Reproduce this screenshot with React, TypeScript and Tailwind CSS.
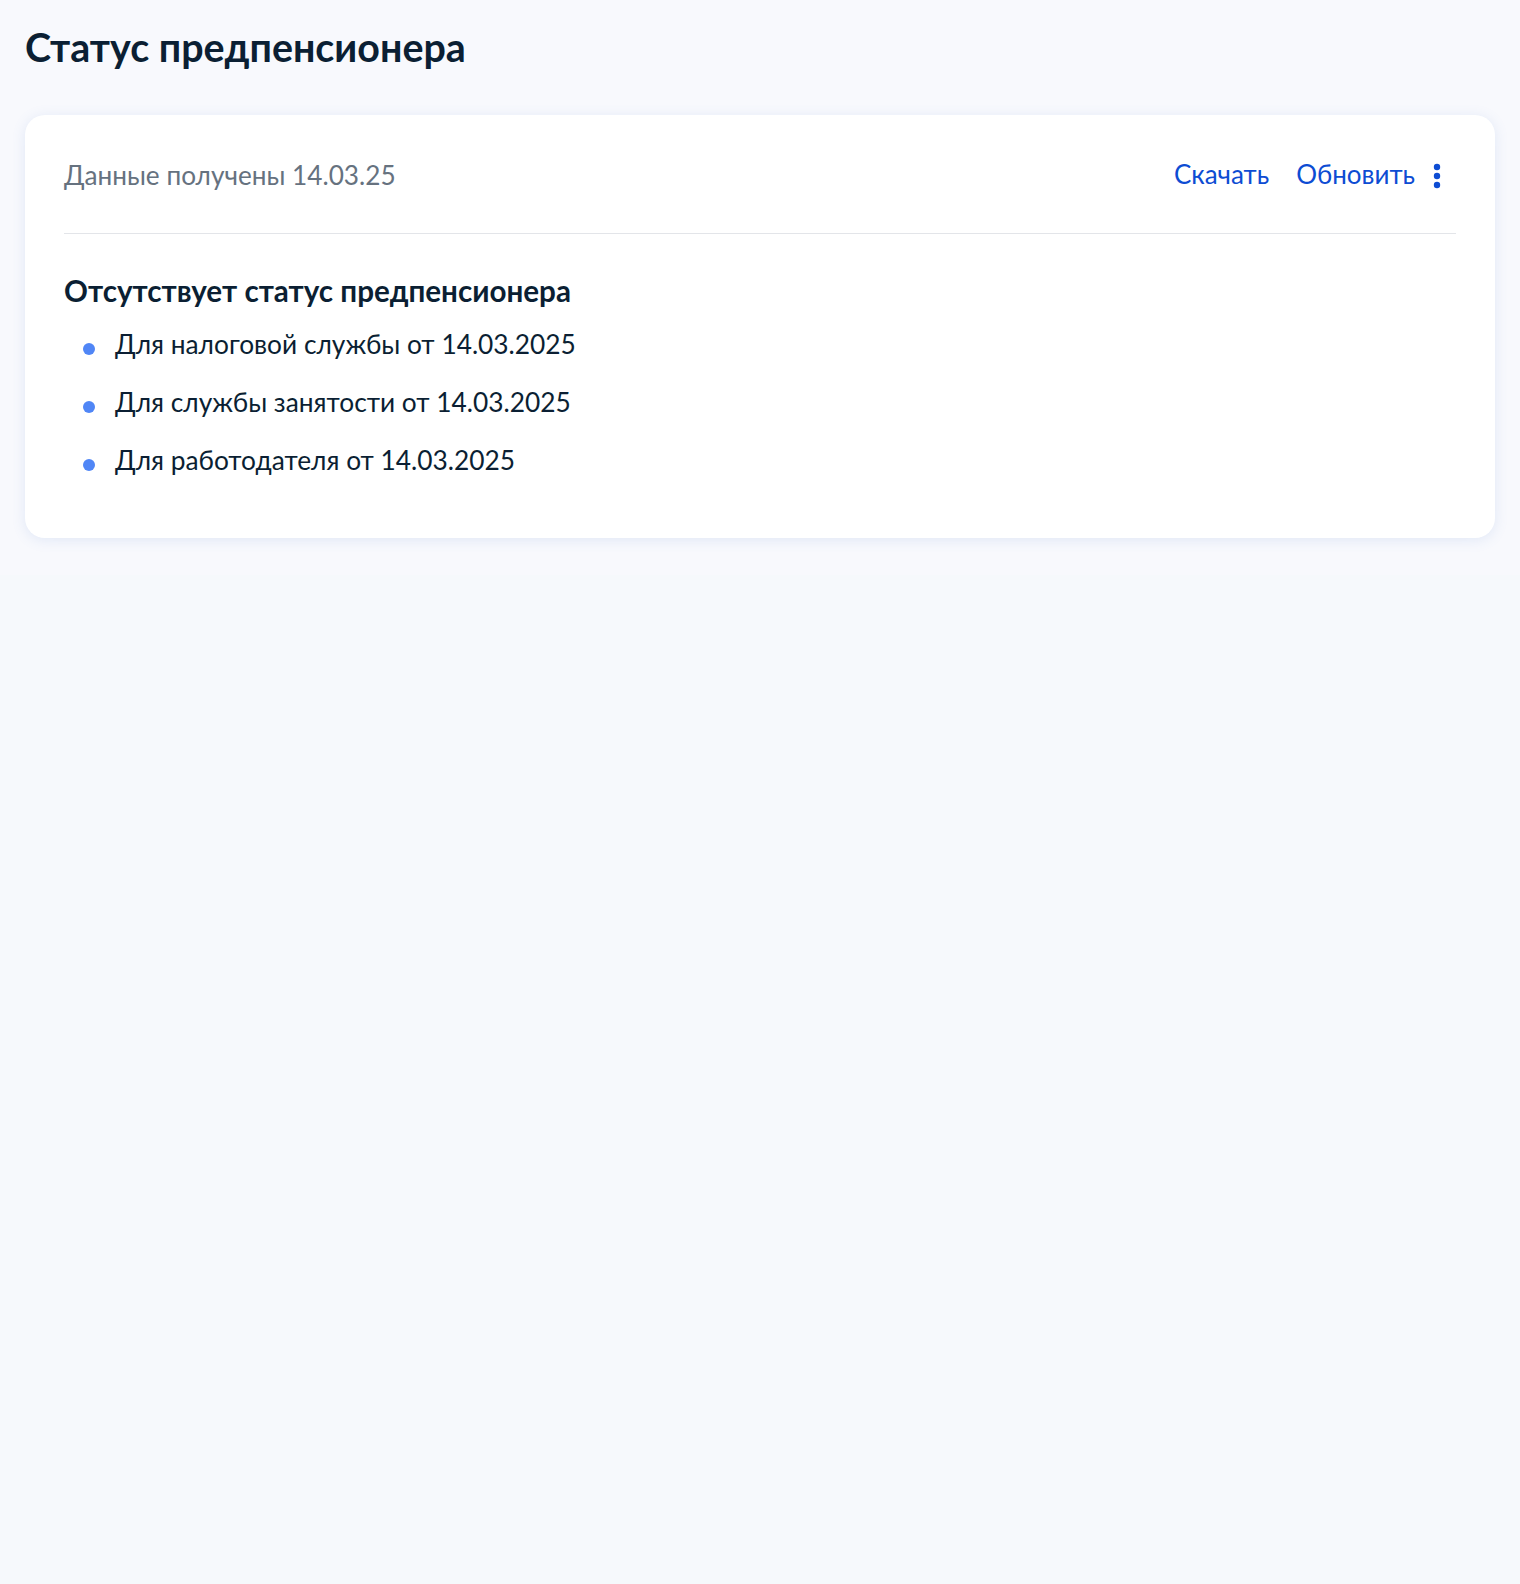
import React from "react";

const items = [
  "Для налоговой службы от 14.03.2025",
  "Для службы занятости от 14.03.2025",
  "Для работодателя от 14.03.2025",
];

const KebabIcon: React.FC = () => (
  <svg width="8" height="26" viewBox="0 0 8 26" fill="#0d4cd3">
    <circle cx="4" cy="4" r="3.2" />
    <circle cx="4" cy="13" r="3.2" />
    <circle cx="4" cy="22" r="3.2" />
  </svg>
);

export default function App() {
  return (
    <div
      className="min-h-[1584px] bg-[#f6f9fc] text-[#0b1f33]"
      style={{ fontFamily: "Lato, 'Noto Sans', sans-serif" }}
    >
      <div className="bg-[#f8f9fd] px-[25px] pb-[37px] pt-[25px]">
        <h1 className="text-[39.4px] font-bold leading-[44px]">Статус предпенсионера</h1>
        <div className="mt-[46px] rounded-[20px] bg-white px-[39px] pb-[61px] pt-[40px] shadow-[0_2px_14px_rgba(86,124,204,0.14)]">
          <div className="flex h-[38px] items-center justify-between">
            <span className="pt-[3px] text-[26.2px] text-[#66727f]">Данные получены 14.03.25</span>
            <div className="flex items-center text-[26px] text-[#0d4cd3]">
              <span>Скачать</span>
              <span className="ml-[27px]">Обновить</span>
              <span className="ml-[18px] mr-[15px] mt-[4px] flex items-center">
                <KebabIcon />
              </span>
            </div>
          </div>
          <div className="mt-[40px] h-px bg-[#e3e5e9]" />
          <h2 className="mt-[40px] text-[29.6px] font-bold leading-[34px]">
            Отсутствует статус предпенсионера
          </h2>
          <ul className="mt-[19px] flex flex-col gap-[24px]">
            {items.map((t) => (
              <li key={t} className="flex items-center text-[26.3px] leading-[34px]">
                <span className="ml-[19px] mr-[20px] mt-[10px] h-[12px] w-[12px] rounded-full bg-[#5086f6]" />
                <span>{t}</span>
              </li>
            ))}
          </ul>
        </div>
      </div>
    </div>
  );
}
